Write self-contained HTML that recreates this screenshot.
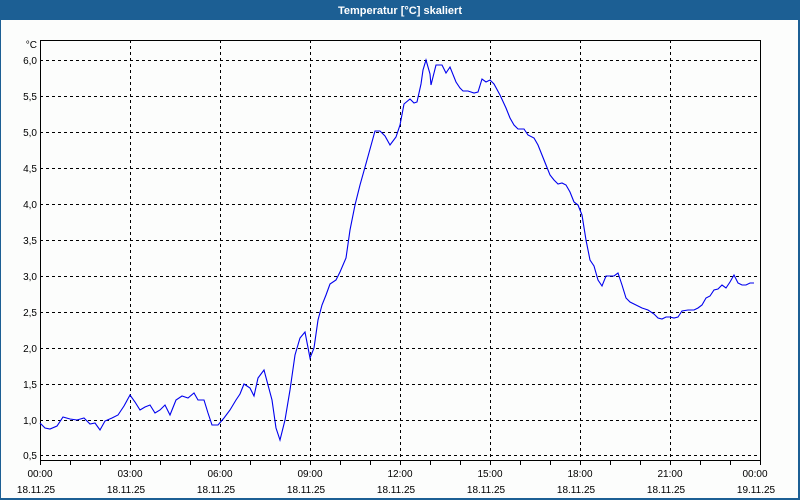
<!DOCTYPE html>
<html><head><meta charset="utf-8"><style>
html,body{margin:0;padding:0;background:#fcfdfc;}
body{width:800px;height:500px;overflow:hidden;position:relative;font-family:"Liberation Sans",sans-serif;}
</style></head><body>
<svg width="800" height="500" xmlns="http://www.w3.org/2000/svg" style="position:absolute;left:0;top:0">
<rect x="0" y="0" width="800" height="500" fill="#fcfdfc"/>
<rect x="0" y="0" width="800" height="20" fill="#1c5f94"/>
<rect x="0" y="0" width="1" height="500" fill="#1c5f94"/>
<rect x="798" y="0" width="2" height="500" fill="#1c5f94"/>
<rect x="0" y="498" width="800" height="2" fill="#1c5f94"/>
<text x="400" y="14" fill="#fff" font-size="11" font-weight="bold" text-anchor="middle">Temperatur [°C] skaliert</text>
<g stroke="#000" stroke-width="1" stroke-dasharray="3,3" fill="none">
<path d="M40 60.5H760M40 96.5H760M40 132.5H760M40 168.5H760M40 204.5H760M40 240.5H760M40 276.5H760M40 312.5H760M40 348.5H760M40 384.5H760M40 420.5H760M40 455.5H760"/>
<path d="M130.5 40V460M220.5 40V460M310.5 40V460M400.5 40V460M490.5 40V460M580.5 40V460M670.5 40V460"/>
</g>
<rect x="40.5" y="40.5" width="720" height="420" fill="none" stroke="#000" stroke-width="1"/>
<g stroke="#000" stroke-width="1">
<path d="M40.5 461V465M70.5 461V465M100.5 461V465M130.5 461V465M160.5 461V465M190.5 461V465M220.5 461V465M250.5 461V465M280.5 461V465M310.5 461V465M340.5 461V465M370.5 461V465M400.5 461V465M430.5 461V465M460.5 461V465M490.5 461V465M520.5 461V465M550.5 461V465M580.5 461V465M610.5 461V465M640.5 461V465M670.5 461V465M700.5 461V465M730.5 461V465M760.5 461V465"/>
</g>
<polyline fill="none" stroke="#0000ee" stroke-width="1.1" points="40,423 45,428 50,429 57,426 63,417 70,419 77,420 84,418 90,424 95,423 100,430 105,421 112,418 118,415 124,406 130,395 135,402 140,410 145,407 150,405 155,413 160,410 165,405 170,415 176,400 182,396 188,398 194,393 198,400 204,400 208,413 212,425 218,425 224,418 230,410 236,400 240,394 244,384 250,388 254,396 258,378 264,370 268,385 272,400 276,428 280,440 285,420 290,390 295,355 300,338 305,332 310,358 314,348 318,320 322,305 326,295 330,284 336,280 340,272 346,258 350,230 355,205 360,185 367,160 375,131 380,131 385,136 390,145 396,137 400,125 404,104 410,99 414,103 417,102 421,84 423,70 426,60 430,74 431,85 436,65 442,65 446,73 450,67 456,82 460,88 463,91 468,91 474,93 478,92 482,79 486,82 490,80 494,84 500,95 506,108 510,118 514,125 518,129 524,129 528,135 534,138 538,145 542,155 546,165 550,175 554,180 558,184 562,183 566,185 570,192 574,202 578,205 582,215 586,240 590,260 594,266 598,280 602,286 606,276 610,276 614,276 618,273 622,285 626,298 630,302 636,305 642,308 648,310 654,314 658,318 662,319 666,317 670,317 674,318 678,317 682,311 688,310 694,310 698,308 702,305 706,298 710,296 714,290 718,289 722,285 726,288 730,282 734,275 738,283 742,285 746,285 750,283 754,283"/>
<g font-size="10" fill="#000" text-anchor="end">
<text x="37" y="48">°C</text>
<text x="37" y="64">6,0</text><text x="37" y="100">5,5</text><text x="37" y="136">5,0</text><text x="37" y="172">4,5</text><text x="37" y="208">4,0</text><text x="37" y="244">3,5</text><text x="37" y="280">3,0</text><text x="37" y="316">2,5</text><text x="37" y="352">2,0</text><text x="37" y="388">1,5</text><text x="37" y="424">1,0</text><text x="37" y="459">0,5</text>
</g>
<g font-size="10" fill="#000" text-anchor="middle">
<text x="40" y="477">00:00</text><text x="130" y="477">03:00</text><text x="220" y="477">06:00</text><text x="310" y="477">09:00</text><text x="400" y="477">12:00</text><text x="490" y="477">15:00</text><text x="580" y="477">18:00</text><text x="670" y="477">21:00</text><text x="755" y="477">00:00</text>
<text x="36" y="493">18.11.25</text><text x="126" y="493">18.11.25</text><text x="216" y="493">18.11.25</text><text x="306" y="493">18.11.25</text><text x="396" y="493">18.11.25</text><text x="486" y="493">18.11.25</text><text x="576" y="493">18.11.25</text><text x="666" y="493">18.11.25</text><text x="756" y="493">19.11.25</text>
</g>
</svg>
</body></html>
